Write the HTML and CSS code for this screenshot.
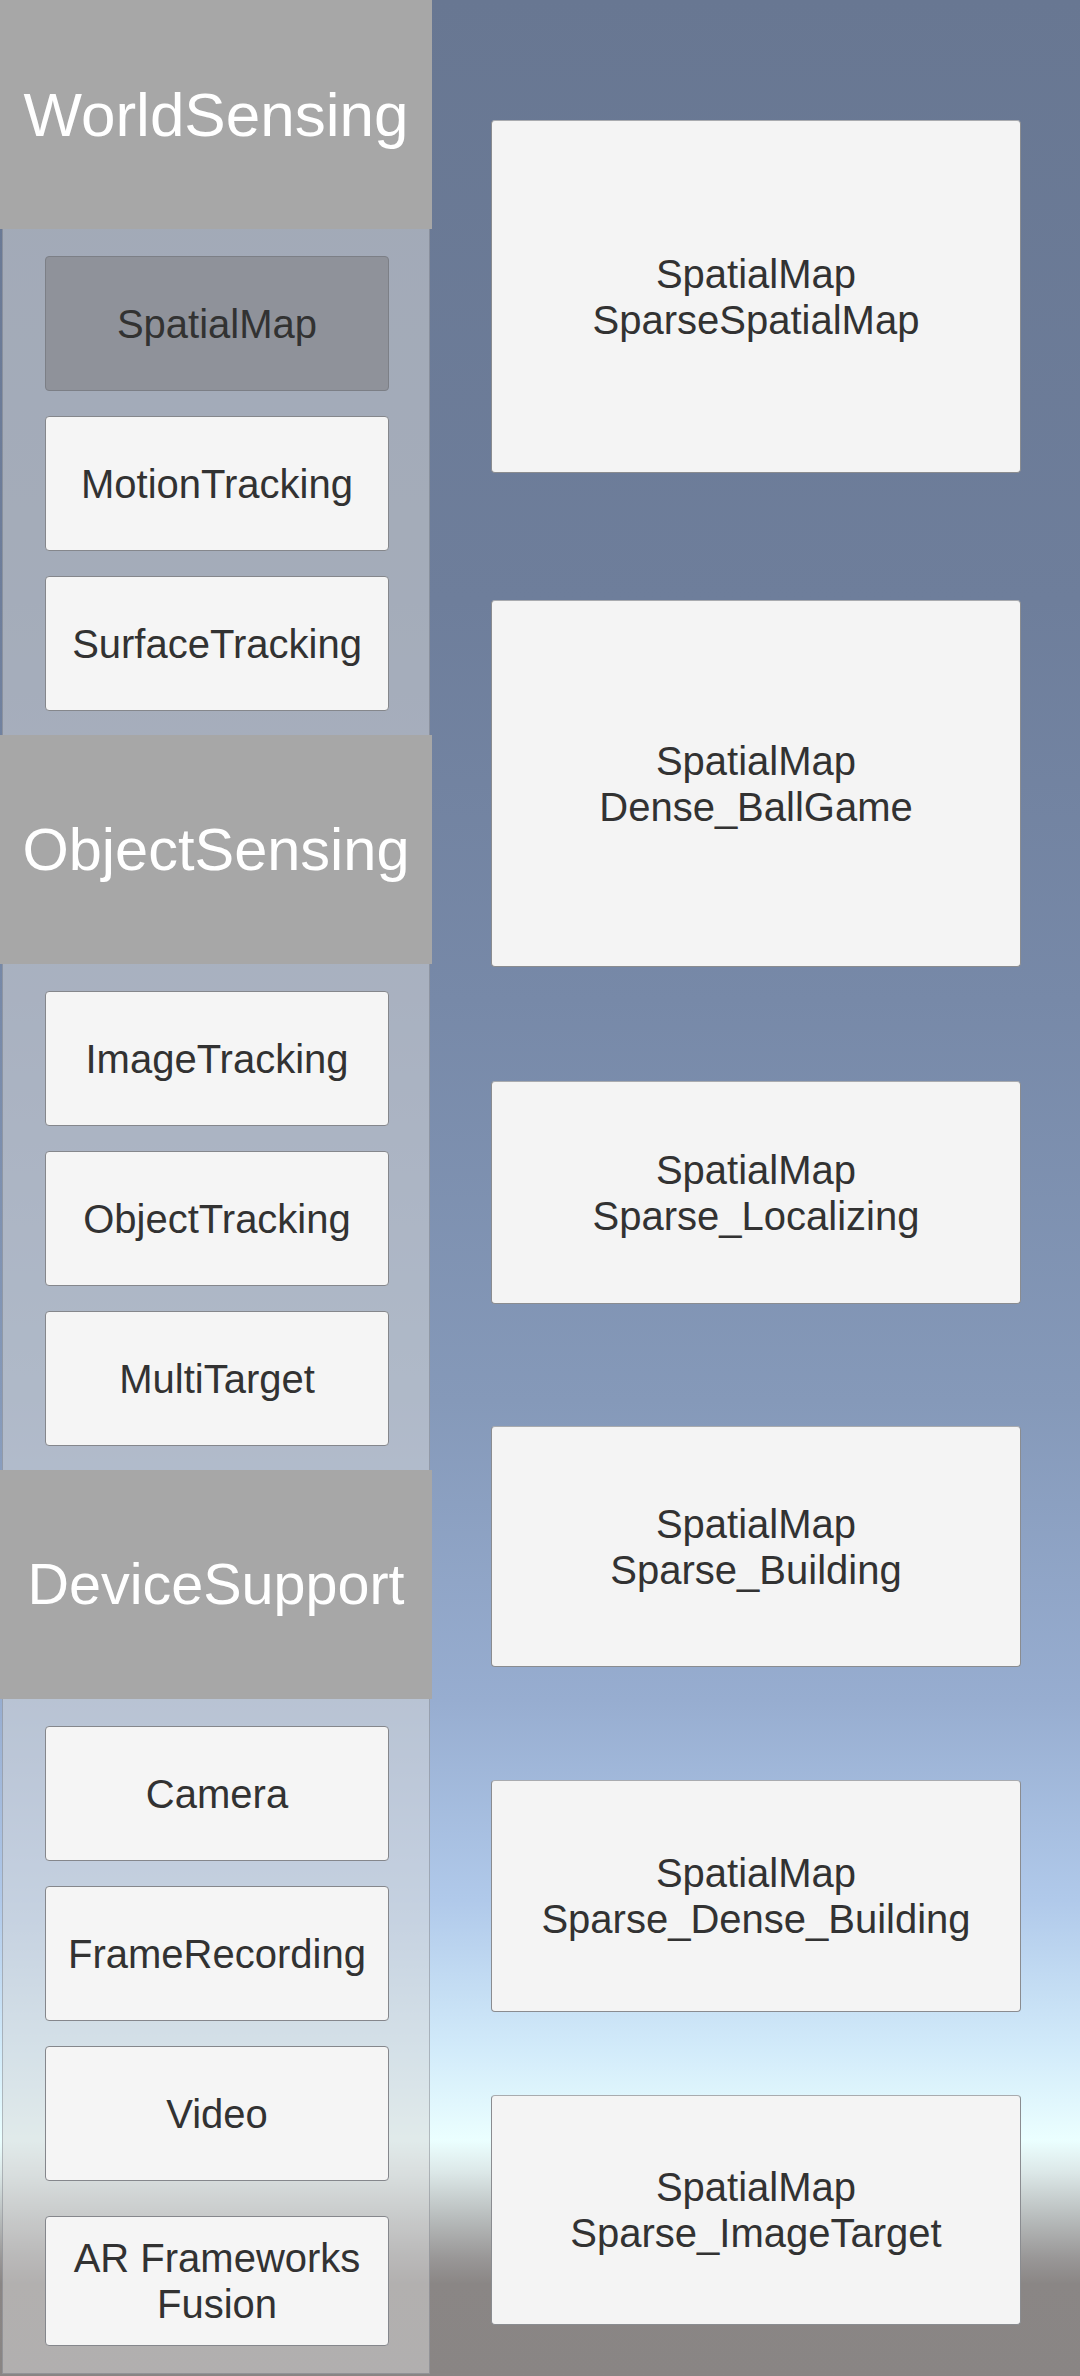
FILE: index.html
```html
<!DOCTYPE html>
<html lang="en">
<head>
<meta charset="utf-8">
<title>Samples</title>
<link rel="stylesheet" href="styles.css">
</head>
<body>
<div class="screen">
  <nav class="menu">
    <section class="group">
      <h2 class="group-title title-world">WorldSensing</h2>
      <div class="group-list">
        <div class="btn is-selected">SpatialMap</div>
        <div class="btn">MotionTracking</div>
        <div class="btn">SurfaceTracking</div>
      </div>
    </section>
    <section class="group">
      <h2 class="group-title title-object">ObjectSensing</h2>
      <div class="group-list">
        <div class="btn">ImageTracking</div>
        <div class="btn">ObjectTracking</div>
        <div class="btn">MultiTarget</div>
      </div>
    </section>
    <section class="group group-last">
      <h2 class="group-title title-device">DeviceSupport</h2>
      <div class="group-list">
        <div class="btn">Camera</div>
        <div class="btn">FrameRecording</div>
        <div class="btn">Video</div>
        <div class="btn btn-two-line">AR Frameworks<br>Fusion</div>
      </div>
    </section>
  </nav>
  <main class="samples">
    <div class="card">SpatialMap<br>SparseSpatialMap</div>
    <div class="card">SpatialMap<br>Dense_BallGame</div>
    <div class="card">SpatialMap<br>Sparse_Localizing</div>
    <div class="card">SpatialMap<br>Sparse_Building</div>
    <div class="card">SpatialMap<br>Sparse_Dense_Building</div>
    <div class="card">SpatialMap<br>Sparse_ImageTarget</div>
  </main>
</div>
</body>
</html>
```

FILE: styles.css
```css
* {
  box-sizing: border-box;
}

html, body {
  margin: 0;
  padding: 0;
}

body {
  width: 1080px;
  height: 2376px;
  overflow: hidden;
  font-family: "Liberation Sans", Arial, sans-serif;
  background: linear-gradient(to bottom,
    #687792 0px,
    #6e7e9b 600px,
    #7789a8 1000px,
    #8599b9 1400px,
    #97add0 1700px,
    #b0c9ea 1900px,
    #d2ebfa 2050px,
    #ebffff 2140px,
    #dce8e8 2172px,
    #b6baba 2220px,
    #999797 2258px,
    #8a8685 2284px,
    #898584 2376px);
}

.screen {
  display: flex;
  width: 1080px;
  height: 2376px;
}

/* ---------- left menu ---------- */

.menu {
  width: 432px;
  height: 2376px;
  display: flex;
  flex-direction: column;
}

.group {
  display: flex;
  flex-direction: column;
}

.group-last {
  flex: 1;
  margin-bottom: 2px;
}

.group-title {
  margin: 0;
  height: 229px;
  flex: none;
  display: flex;
  align-items: center;
  justify-content: center;
  background: #a7a7a7;
  color: #ffffff;
  font-weight: normal;
  font-size: 61px;
  line-height: 1;
  white-space: nowrap;
}

.title-world { font-size: 62px; }
.title-object { font-size: 59.5px; }
.title-device { font-size: 57.5px; }

.group-list {
  margin: 0 2px;
  padding: 27px 0 24px 42px;
  display: flex;
  flex-direction: column;
  gap: 25px;
  background: rgba(215, 215, 215, 0.52);
  border-left: 1px solid rgba(90, 95, 105, 0.35);
  border-right: 1px solid rgba(90, 95, 105, 0.35);
}

.group-last .group-list {
  flex: 1;
  border-bottom: 1px solid rgba(90, 95, 105, 0.35);
}

.btn {
  width: 344px;
  height: 135px;
  flex: none;
  display: flex;
  align-items: center;
  justify-content: center;
  text-align: center;
  background: #f5f5f5;
  border: 1px solid #85878c;
  border-radius: 4px;
  color: #323232;
  font-size: 40px;
  line-height: 46px;
  white-space: nowrap;
}

.btn.is-selected {
  background: #8f929a;
  border-color: #7c7f86;
}

.btn-two-line {
  height: 130px;
  margin-top: 10px;
}

/* ---------- right sample list ---------- */

.samples {
  flex: 1;
  display: flex;
  flex-direction: column;
  align-items: center;
  padding-top: 120px;
}

.card {
  width: 530px;
  flex: none;
  display: flex;
  align-items: center;
  justify-content: center;
  text-align: center;
  background: #f4f4f4;
  border: 1px solid #8a8c90;
  border-top-color: #a9abaf;
  border-radius: 4px;
  color: #323232;
  font-size: 40px;
  line-height: 46px;
  white-space: nowrap;
}

.card:nth-child(1) { height: 353px; }
.card:nth-child(2) { height: 367px; margin-top: 127px; }
.card:nth-child(3) { height: 223px; margin-top: 114px; }
.card:nth-child(4) { height: 241px; margin-top: 122px; }
.card:nth-child(5) { height: 232px; margin-top: 113px; }
.card:nth-child(6) { height: 230px; margin-top: 83px; }
```
